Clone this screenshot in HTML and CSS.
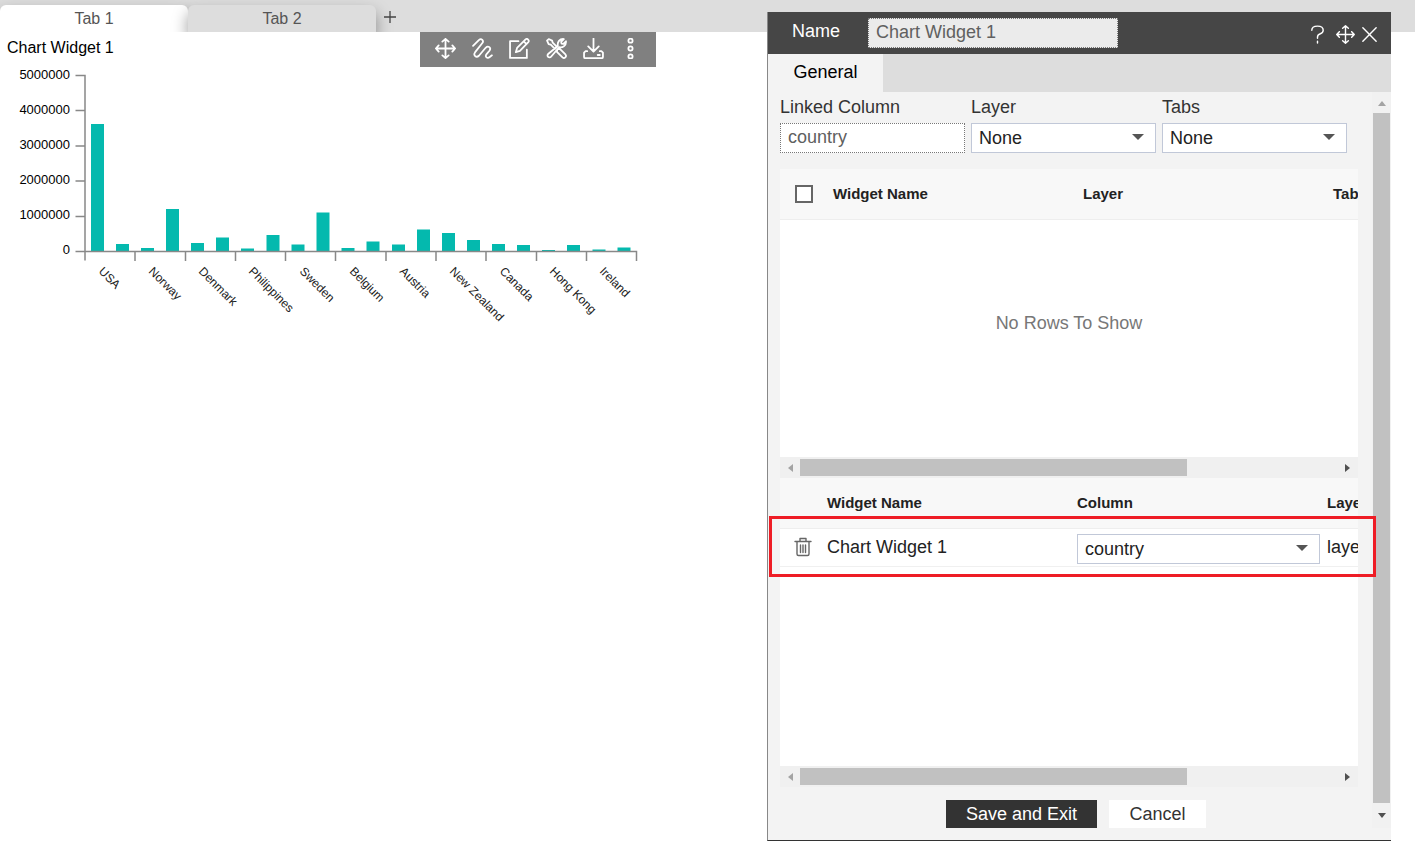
FILE: index.html
```html
<!DOCTYPE html>
<html lang="en">
<head>
<meta charset="utf-8">
<title>Chart Widget 1</title>
<link rel="stylesheet" href="styles.css">
</head>
<body>
<svg class="sprite" aria-hidden="true">
  <symbol id="move" viewBox="0 0 20 20"><path d="M10 1v18M1 10h18M7 3.500 10 .8l3 2.700M7 16.500l3 2.700 3-2.700M3.500 7 .8 10l2.700 3M16.500 7l2.700 3-2.700 3"/></symbol>
</svg>

<nav class="tabs">
  <button class="tab tab-active" type="button">Tab 1</button>
  <button class="tab" type="button">Tab 2</button>
  <button class="tab-add" type="button" aria-label="Add tab"><svg viewBox="0 0 14 14"><path d="M7 1v12M1 7h12"/></svg></button>
</nav>

<main class="widget">
  <header class="widget-head">
    <h1 class="widget-title">Chart Widget 1</h1>
    <div class="toolbar">
      <button type="button" aria-label="Move"><svg viewBox="0 0 20 20"><use href="#move"/></svg></button>
      <button type="button" aria-label="Line"><svg viewBox="0 0 20 20"><path d="M1 7.500 6.500 2c2.500-2.200 5.200.6 3.200 3L3 13.500c-2.200 3 1 5.800 3.600 3.400L13 9.300c2.600-2.600 5.600.2 3.600 2.800l-2.700 3.200c-2 2.600.8 4.700 3 2.800L19 16.500"/></svg></button>
      <button type="button" aria-label="Edit"><svg viewBox="0 0 20 20"><path d="M9 3H1v16h16v-8M6.500 13.500l1.200-4L15.800 1.300q1.200-1 2.400.2t.2 2.400L10.400 12.200zM14 3.200l2.700 2.700"/></svg></button>
      <button type="button" aria-label="Tools"><svg viewBox="0 0 20 20"><path d="M1 2.600 2.600 1l3.200 1.500.6 2 4 4-1.900 1.900-4-4-2-.6zM11.700 10.600l1.500-.2 5.300 5.300c1.600 1.900-.9 4.400-2.800 2.800l-5.300-5.300.2-1.500M11.300 7.600c-.8-3.600 1.700-7 5.700-6.600l-2.600 2.600.4 1.700 1.700.4L19 3.100c.5 3.800-3 6.500-6.500 5.700L5 17.600c-2 2.500-5.100-.6-2.700-2.600z"/></svg></button>
      <button type="button" aria-label="Download"><svg viewBox="0 0 20 20"><path d="M10 .5v12M5 8l5 5 5-5M4 12.500H2.500L1 14v4q0 1.200 1.200 1.200h15.600Q19 19.200 19 18v-4l-1.500-1.500H16M14 16.200h2"/></svg></button>
      <button type="button" aria-label="More"><svg viewBox="0 0 20 20"><circle cx="10" cy="2.500" r="2"/><circle cx="10" cy="10" r="2"/><circle cx="10" cy="17.500" r="2"/></svg></button>
    </div>
  </header>
  <svg class="chart" viewBox="0 67 656 270" role="img" aria-label="Bar chart by country">
    <g class="bars">
      <path d="M91 124h13v128h-13zM116 244h13v8h-13zM141 248h13v4h-13zM166 209h13v43h-13zM191 243h13v9h-13zM216 237.500h13v14.500h-13zM241 248.500h13v3.500h-13zM266.500 235h13v17h-13zM291.500 244.500h13v7.500h-13zM316.500 212.500h13v39.500h-13zM341.500 248h13v4h-13zM366.500 241.500h13v10.500h-13zM392 244.500h13v7.500h-13zM417 229.500h13v22.500h-13zM442 233h13v19h-13zM467 240h13v12h-13zM492 244h13v8h-13zM517 245h13v7h-13zM542 250h13v2h-13zM567 245h13v7h-13zM592.500 249.500h13v2.500h-13zM617.500 247.500h13v4.500h-13z"/>
    </g>
    <path class="axis" d="M75.500 75.500h9.500v185M75.500 110.500h9.500M75.500 146h9.500M75.500 181h9.500M75.500 216.500h9.500M75.500 251.500h561v9.500M135 251.500v9.500M185.500 251.500v9.500M235.500 251.500v9.500M285.500 251.500v9.500M335.500 251.500v9.500M386 251.500v9.500M436 251.500v9.500M486 251.500v9.500M536.500 251.500v9.500M586.500 251.500v9.500"/>
    <g class="y-labels">
      <text x="70" y="79">5000000</text>
      <text x="70" y="114">4000000</text>
      <text x="70" y="149">3000000</text>
      <text x="70" y="184">2000000</text>
      <text x="70" y="219">1000000</text>
      <text x="70" y="254">0</text>
    </g>
    <g class="x-labels">
      <text transform="translate(98 272) rotate(45)">USA</text>
      <text transform="translate(148 272) rotate(45)">Norway</text>
      <text transform="translate(198 272) rotate(45)">Denmark</text>
      <text transform="translate(248 272) rotate(45)">Philippines</text>
      <text transform="translate(299 272) rotate(45)">Sweden</text>
      <text transform="translate(349 272) rotate(45)">Belgium</text>
      <text transform="translate(399 272) rotate(45)">Austria</text>
      <text transform="translate(449 272) rotate(45)">New Zealand</text>
      <text transform="translate(499 272) rotate(45)">Canada</text>
      <text transform="translate(549 272) rotate(45)">Hong Kong</text>
      <text transform="translate(599 272) rotate(45)">Ireland</text>
    </g>
  </svg>
</main>

<section class="dialog" role="dialog" aria-label="Widget links">
  <header class="dialog-head">
    <label for="name">Name</label>
    <input id="name" class="readonly" type="text" value="Chart Widget 1" readonly>
    <div class="dialog-actions">
      <button type="button" aria-label="Help"><svg viewBox="0 0 20 20"><path d="M4 5.500Q4 1.200 10 1.200t6 4.300q0 2.500-3 3.700t-3 3.300V14M10 17v2"/></svg></button>
      <button type="button" aria-label="Move"><svg viewBox="0 0 20 20"><use href="#move"/></svg></button>
      <button type="button" aria-label="Close"><svg viewBox="0 0 20 20"><path d="m3 3 14 14M17 3 3 17"/></svg></button>
    </div>
  </header>
  <div class="dialog-tabs"><button class="dialog-tab" type="button">General</button></div>
  <div class="dialog-body">
    <div class="content">
      <div class="fields">
        <div class="field">
          <label for="linked">Linked Column</label>
          <input id="linked" class="readonly" type="text" value="country" readonly>
        </div>
        <div class="field">
          <label for="layer">Layer</label>
          <div class="select"><select id="layer"><option>None</option></select></div>
        </div>
        <div class="field">
          <label for="tabs">Tabs</label>
          <div class="select"><select id="tabs"><option>None</option></select></div>
        </div>
      </div>

      <div class="grid">
        <div class="viewport">
          <table>
            <colgroup><col class="col-check"><col class="col"><col class="col"><col></colgroup>
            <thead><tr><th><input type="checkbox" aria-label="Select all"></th><th>Widget Name</th><th>Layer</th><th>Tab</th></tr></thead>
          </table>
          <p class="empty">No Rows To Show</p>
        </div>
        <div class="hscroll"><i class="arrow left"></i><div class="track"><div class="thumb"></div></div><i class="arrow right"></i></div>
      </div>

      <div class="grid">
        <div class="viewport">
          <table>
            <colgroup><col class="col-icon"><col class="col"><col class="col"><col></colgroup>
            <thead><tr><th></th><th>Widget Name</th><th>Column</th><th>Layer</th></tr></thead>
            <tbody>
              <tr>
                <td><button class="trash" type="button" aria-label="Delete"><svg viewBox="0 0 18 20"><path d="M1 4.500h16M6 4V1.500h6V4M3 4.500V17q0 1.500 1.500 1.500h9q1.500 0 1.500-1.500V4.500M6.500 8v7.500M9 8v7.500M11.500 8v7.500"/></svg></button></td>
                <td>Chart Widget 1</td>
                <td><div class="select"><select aria-label="Column"><option>country</option></select></div></td>
                <td>layer</td>
              </tr>
            </tbody>
          </table>
        </div>
        <div class="hscroll"><i class="arrow left"></i><div class="track"><div class="thumb"></div></div><i class="arrow right"></i></div>
        <div class="highlight"></div>
      </div>

      <footer class="buttons">
        <button class="save" type="button">Save and Exit</button>
        <button class="cancel" type="button">Cancel</button>
      </footer>
    </div>
    <div class="vscroll"><i class="arrow up"></i><div class="thumb"></div><i class="arrow down"></i></div>
  </div>
</section>
</body>
</html>
```

FILE: styles.css
```css
* { box-sizing: border-box; }
body { margin: 0; min-height: 100vh; background: #fff; color: #222; font: 16px "Liberation Sans", Arial, sans-serif; position: relative; }
button, input, select { font: inherit; color: inherit; margin: 0; }
button { border: 0; background: none; padding: 0; }
svg { fill: none; stroke: currentColor; stroke-width: 1.5; stroke-linecap: round; stroke-linejoin: round; }
.sprite { display: none; }

.tabs { display: flex; height: 32px; padding-top: 5px; background: #ddd; overflow: hidden; }
.tab { width: 188px; background: #ddd; color: #555; border-radius: 6px 6px 0 0; box-shadow: 0 8px 16px rgba(0, 0, 0, .4); }
.tab-active { background: #fff; }
.tab-add { width: 28px; height: 24px; color: #444; }
.tab-add svg { width: 14px; height: 14px; margin-top: 3px; stroke-width: 1.3; stroke-linecap: butt; }

.widget { width: 656px; max-width: 100%; }
.widget-head { display: flex; justify-content: space-between; height: 35px; padding-left: 7px; }
.widget-title { margin: 0; font-size: 16px; font-weight: normal; line-height: 31px; color: #000; }
.toolbar { display: flex; align-items: center; gap: 16px; padding: 0 15px 3px; background: #808080; color: #fff; }
.toolbar svg { display: block; width: 21px; height: 21px; stroke-width: 1.7; }
.chart { display: block; width: 100%; }
.bars { fill: #04b9ae; stroke: none; }
.axis { stroke: #888; stroke-linecap: butt; stroke-linejoin: miter; }
.y-labels { fill: #000; stroke: none; font-size: 13px; text-anchor: end; }
.x-labels { fill: #222; stroke: none; font-size: 12px; }

.dialog { position: absolute; top: 12px; left: 767px; right: 24px; min-width: 480px; background: #f3f3f3; border: solid #333; border-width: 0 0 1px 1px; border-left-color: #888; font-size: 18px; }
.dialog-head { display: flex; align-items: center; height: 42px; padding: 0 12px 0 24px; background: #464646; color: #fff; }
.dialog-head label { width: 76px; line-height: 20px; padding-bottom: 4px; }
.dialog-head .readonly { width: 250px; background: #ebebeb; }
.dialog-actions { display: flex; gap: 5px; margin-left: auto; padding-top: 2px; }
.dialog-actions svg { display: block; width: 19px; height: 19px; stroke-width: 1.5; }
.dialog-actions button:first-child { margin-right: 4px; }
.dialog-tabs { display: flex; height: 38px; background: #ddd; }
.dialog-tab { width: 115px; padding-bottom: 2px; background: #f3f3f3; color: #000; }
.dialog-body { display: flex; padding-bottom: 12px; }
.content { flex: 1; min-width: 0; padding-left: 12px; }
.fields { display: grid; grid-template-columns: repeat(3, 1fr); gap: 6px; margin-right: 25px; padding-bottom: 16px; }
.field label { display: block; line-height: 31px; color: #333; }
.readonly { display: block; width: 100%; height: 30px; padding: 0 7px 2px; border: 1px dotted #777; background: #fff; color: #606060; outline: 0; }
.select { position: relative; }
.select select { display: block; appearance: none; width: 100%; height: 30px; padding: 0 7px; border: 1px solid #c1c8d8; border-radius: 0; background: #fff; color: #222; }
.select::after { content: ""; position: absolute; right: 12px; top: 11px; border: solid transparent; border-width: 6px 6px 0; border-top-color: #555; pointer-events: none; }

.grid { position: relative; margin-right: 14px; }
.viewport { height: 288px; overflow: hidden; background: #fff; }
table { table-layout: fixed; width: 850px; border-collapse: collapse; }
.col-check { width: 53px; }
.col-icon { width: 47px; }
.col { width: 250px; }
th { height: 50px; padding: 0; background: #f8f8f8; border-bottom: 1px solid #eee; font-size: 15px; text-align: left; }
td { height: 38px; padding: 0; border-bottom: 1px solid #f0f0f0; line-height: 20px; }
td .select { margin: 3px 7px 0 0; }
th input { appearance: none; display: block; width: 18px; height: 18px; margin-left: 15px; border: 2px solid #666; background: #fff; }
.empty { margin: 0; text-align: center; line-height: 206px; color: #777; }
.trash { display: block; margin-left: 14px; color: #666; }
.trash svg { display: block; width: 18px; height: 20px; stroke-width: 1.4; }

.hscroll { display: flex; align-items: center; height: 21px; padding: 0 8px; background: #f0f0f0; }
.track { flex: 1; margin: 0 7px; }
.hscroll .thumb { width: 72%; height: 17px; }
.thumb { background: #c1c1c1; }
.arrow { border: solid transparent; }
.left { border-width: 4px 5px 4px 0; border-right-color: #a3a3a3; }
.right { border-width: 4px 0 4px 5px; border-left-color: #505050; }
.up { border-width: 0 4px 5px; border-bottom-color: #a3a3a3; }
.down { border-width: 5px 4px 0; border-top-color: #505050; }
.vscroll { display: flex; flex-direction: column; align-items: center; gap: 7px; width: 19px; padding: 9px 0 10px; background: #f1f1f1; }
.vscroll .thumb { flex: 1; width: 17px; }
.vscroll .down { margin-top: 3px; }
.highlight { position: absolute; top: 38px; left: -11px; right: -18px; height: 61px; border: 3px solid #ee1c25; pointer-events: none; }

.buttons { display: flex; justify-content: center; gap: 12px; padding-top: 13px; }
.buttons button { height: 28px; }
.save { width: 151px; background: #333; color: #fff; }
.cancel { width: 97px; background: #fff; color: #333; }
```
